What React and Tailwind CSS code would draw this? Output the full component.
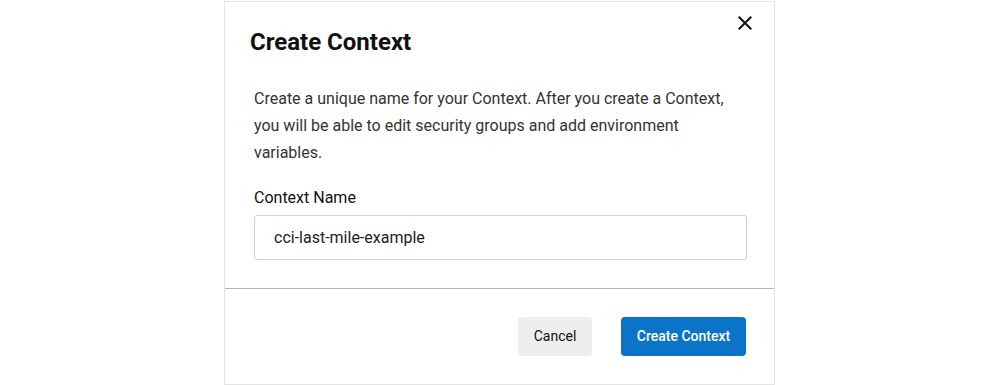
export default function App() {
  return (
    <div className="w-full h-[385px] bg-white pl-[224px] pt-px" style={{ fontFamily: "Roboto, 'Liberation Sans', sans-serif" }}>
      <div className="w-[551px] h-[384px] border border-[#e4e4e4] bg-white flex flex-col">
        <div className="flex-1 pl-[25px] pr-[22px] pt-[13px] flex flex-col">
          <div className="flex justify-between items-start">
            <h2 className="mt-[13px] text-[24px] leading-[28px] font-bold text-[#111]">Create Context</h2>
            <button className="w-[14px] h-[14px] mt-[1px] mr-0">
              <svg viewBox="0 0 14 14" width="14" height="14" fill="none" stroke="#111" strokeWidth="2.1" strokeLinecap="square">
                <path d="M1.5 1.5 L12.5 12.5 M12.5 1.5 L1.5 12.5" />
              </svg>
            </button>
          </div>
          <div className="pl-[4px] pr-[4px] mt-[29px]">
            <p className="text-[16px] leading-[27px] text-[#333]">
              Create a unique name for your Context. After you create a Context, you will be able to edit security groups and add environment variables.
            </p>
            <label className="block mt-[20px] text-[16px] leading-[24px] font-normal text-[#111]">Context Name</label>
            <div className="mt-[5px] h-[45px] w-[493px] border border-[#d0d0d0] rounded-[3px] flex items-center pl-[19px] text-[16px] text-[#222]">
              cci-last-mile-example
            </div>
          </div>
        </div>
        <div className="h-[96px] border-t border-[#b5b5b5] flex items-center justify-end pr-[28px] gap-[29px]">
          <button className="h-[39px] w-[74px] rounded-[4px] bg-[#eeeeee] text-[14px] font-normal text-[#111]">Cancel</button>
          <button className="h-[39px] w-[125px] rounded-[4px] bg-[#0a74c9] text-[14px] font-medium text-white">Create Context</button>
        </div>
      </div>
    </div>
  );
}
